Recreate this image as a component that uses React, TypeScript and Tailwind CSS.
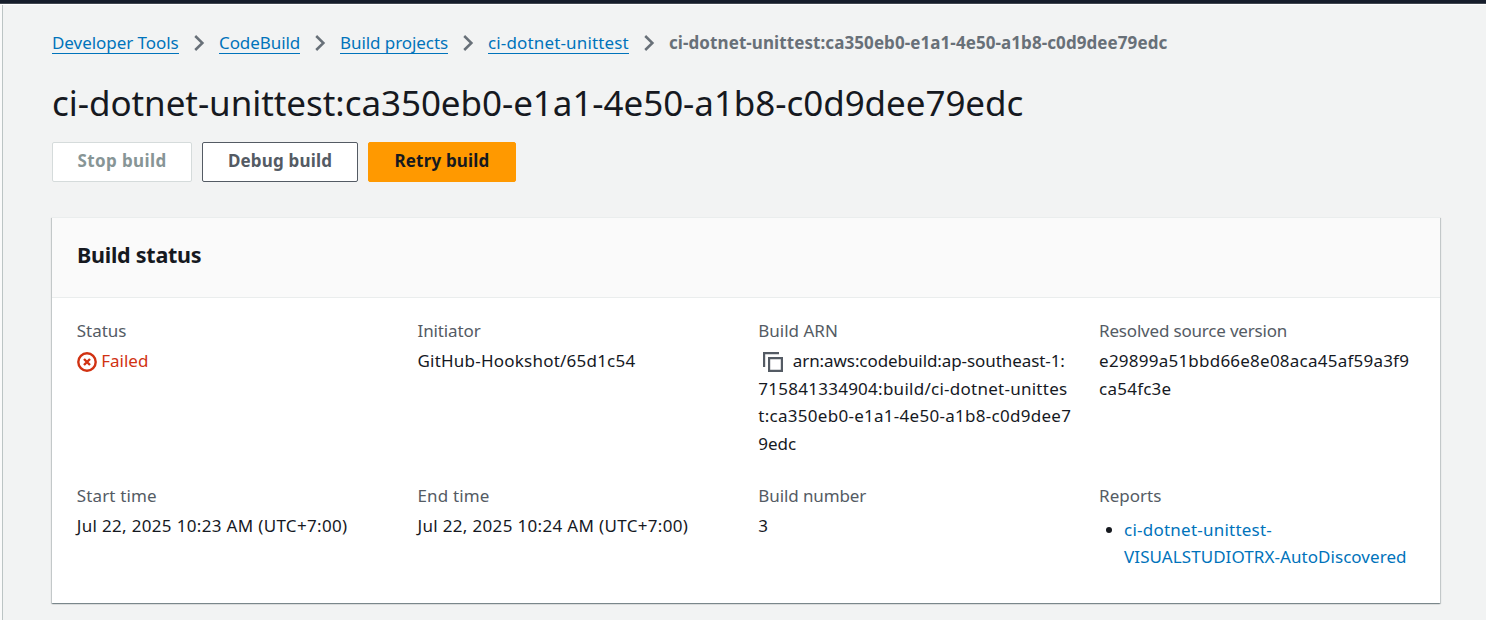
import { Fragment, type ReactNode } from 'react';

const crumbs = [
  { label: 'Developer Tools', cls: 'w-[127px] tracking-[-0.05px]' },
  { label: 'CodeBuild', cls: 'w-[81px] tracking-[-0.08px]' },
  { label: 'Build projects', cls: 'w-[108px] tracking-[-0.07px]' },
  { label: 'ci-dotnet-unittest', cls: 'w-[141px] tracking-[0.15px]' },
];

function Chevron() {
  return (
    <svg className="mt-[10px] h-4 w-10 shrink-0" viewBox="0 0 40 16" fill="none" stroke="#687078" strokeWidth="2.5">
      <path d="M16.2 1 L23.4 8 L16.2 15" />
    </svg>
  );
}

function FailedIcon() {
  return (
    <svg className="mt-[5.5px] h-5 w-5 shrink-0" viewBox="0 0 20 20" fill="none" stroke="#d13212" strokeWidth="2.4">
      <circle cx="10" cy="10" r="8.7" />
      <path d="M7 7 L13 13 M13 7 L7 13" />
    </svg>
  );
}

function CopyIcon() {
  return (
    <svg className="mr-[10px] ml-[4.5px] inline-block h-5 w-5 align-[-5px]" viewBox="0 0 20 20" fill="none" stroke="#545b64" strokeWidth="2.2">
      <path d="M1.1 15 V1.1 H16" />
      <path d="M6.1 6.1 H18.9 V18.9 H6.1 Z" />
    </svg>
  );
}

function Field({ label, cls = '', children }: { label: string; cls?: string; children: ReactNode }) {
  return (
    <div className="whitespace-nowrap">
      <div className={`mb-[2.5px] text-[#545b64] ${cls}`}>{label}</div>
      {children}
    </div>
  );
}

export default function App() {
  return (
    <div className="flex h-[620px] w-full flex-col overflow-hidden bg-[#f2f3f3] font-['Noto_Sans',sans-serif] text-[17px] leading-[27.5px] text-[#16191f]">
      <div className="h-1 shrink-0 border-b border-[#414750] bg-[#161d2b]" />
      <div className="h-px shrink-0 bg-white" />
      <div className="flex flex-1">
        <div className="w-[3px] shrink-0 border-r border-[#bcc4c4] bg-[#fafafa]" />
        <main className="flex-1 pr-[46px] pl-[49px]">
          <nav className="flex h-[48px] items-start pt-[20px] leading-[28px] whitespace-nowrap text-[#0073bb]">
            {crumbs.map((c) => (
              <Fragment key={c.label}>
                <a className={`mt-1 h-[25px] border-b border-[#0073bb] leading-[28px] ${c.cls}`}>{c.label}</a>
                <Chevron />
              </Fragment>
            ))}
            <span className="mt-1 font-bold tracking-[0.08px] text-[#687078]">
              ci-dotnet-unittest:ca350eb0-e1a1-4e50-a1b8-c0d9dee79edc
            </span>
          </nav>
          <h1 className="mt-[28px] h-[44px] text-[35px] leading-[44px] tracking-[-0.06px] whitespace-nowrap">
            ci-dotnet-unittest:ca350eb0-e1a1-4e50-a1b8-c0d9dee79edc
          </h1>
          <div className="mt-[17px] flex gap-[10px] font-bold whitespace-nowrap">
            <button className="h-10 w-[140px] rounded-[2px] border border-[#d5dbdb] bg-white pb-[2px] leading-[36px] tracking-[0.4px] text-[#879596]">
              Stop build
            </button>
            <button className="h-10 w-[156px] rounded-[2px] border border-[#545b64] bg-white pb-[2px] leading-[36px] tracking-[0.18px] text-[#545b64]">
              Debug build
            </button>
            <button className="h-10 w-[148px] rounded-[2px] border border-[#ff9900] bg-[#ff9900] pb-[2px] leading-[36px] tracking-[0.18px] text-[#16191f]">
              Retry build
            </button>
          </div>
          <section className="mt-[35px] h-[386px] bg-white shadow-[0_1px_1px_0_rgba(0,28,36,0.3),1px_1px_1px_0_rgba(0,28,36,0.15),-1px_1px_1px_0_rgba(0,28,36,0.15)]">
            <header className="h-[81px] border-t border-b border-[#eaeded] bg-[#fafafa] pt-[21px] pl-[25px]">
              <h2 className="text-[21.5px] leading-[31px] font-bold tracking-[-0.25px]">Build status</h2>
            </header>
            <div className="grid grid-cols-[repeat(4,340.8px)] gap-y-[25px] pt-[18.6px] pl-[24.7px]">
              <Field label="Status">
                <div className="flex gap-[5px] text-[#d13212]">
                  <FailedIcon />
                  <span className="-ml-[0.5px]">Failed</span>
                </div>
              </Field>
              <Field label="Initiator" cls="tracking-[-0.12px]">
                <div className="tracking-[0.22px]">GitHub-Hookshot/65d1c54</div>
              </Field>
              <Field label="Build ARN">
                <div className="h-[28px] tracking-[-0.08px]">
                  <CopyIcon />
                  arn:aws:codebuild:ap-southeast-1:
                </div>
                <div className="h-[27px] tracking-[0.26px]">715841334904:build/ci-dotnet-unittes</div>
                <div className="h-[28px] tracking-[0.28px]">t:ca350eb0-e1a1-4e50-a1b8-c0d9dee7</div>
                <div className="h-[27px]">9edc</div>
              </Field>
              <Field label="Resolved source version" cls="tracking-[-0.19px]">
                <div className="h-[28px] tracking-[0.23px]">e29899a51bbd66e8e08aca45af59a3f9</div>
                <div className="tracking-[0.23px]">ca54fc3e</div>
              </Field>
              <Field label="Start time" cls="tracking-[0.15px]">
                <div className="tracking-[0.33px]">Jul 22, 2025 10:23 AM (UTC+7:00)</div>
              </Field>
              <Field label="End time" cls="tracking-[0.15px]">
                <div className="tracking-[0.33px]">Jul 22, 2025 10:24 AM (UTC+7:00)</div>
              </Field>
              <Field label="Build number" cls="tracking-[-0.1px]">
                <div>3</div>
              </Field>
              <Field label="Reports">
                <ul className="mt-[6.5px] flex gap-[12px] pl-[7px]">
                  <li className="contents">
                    <span className="mt-[11.5px] h-[6px] w-[6px] rounded-full bg-[#16191f]" />
                    <a className="text-[#0073bb]">
                      <span className="block tracking-[0.23px]">ci-dotnet-unittest-</span>
                      <span className="block tracking-[0.06px]">VISUALSTUDIOTRX-AutoDiscovered</span>
                    </a>
                  </li>
                </ul>
              </Field>
            </div>
          </section>
        </main>
      </div>
    </div>
  );
}
